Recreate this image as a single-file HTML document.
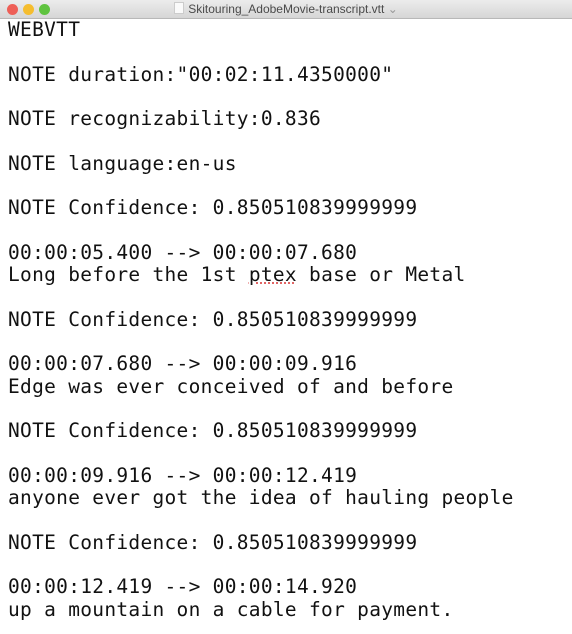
<!DOCTYPE html>
<html><head><style>
html,body{margin:0;padding:0;width:572px;height:634px;overflow:hidden;background:#fff}
.bar{position:absolute;left:0;top:0;width:572px;height:18px;background:linear-gradient(#ececec,#d6d6d6);border-bottom:1px solid #b8b8b8}
.dot{position:absolute;top:4px;width:11px;height:11px;border-radius:50%}
.title{position:absolute;left:0;right:0;top:2px;text-align:center;font:12px "Liberation Sans",sans-serif;color:#4a4a4a}
pre{position:absolute;left:8px;top:19px;margin:0;font:19.5px/22.3px "DejaVu Sans Mono",monospace;color:#111;letter-spacing:0.3px}
.sq{text-decoration:underline dotted #e06060;}
</style></head><body>
<div class="bar">
<div class="dot" style="left:7px;background:#ee5f57"></div>
<div class="dot" style="left:23px;background:#f5bd2f"></div>
<div class="dot" style="left:39px;background:#5fc33f"></div>
<div class="title"><span style="display:inline-block;width:8px;height:10px;background:#fafafa;border:1px solid #ccc;vertical-align:-1px;margin-right:4px"></span>Skitouring_AdobeMovie-transcript.vtt <span style="color:#999">⌄</span></div>
</div>
<pre>WEBVTT

NOTE duration:"00:02:11.4350000"

NOTE recognizability:0.836

NOTE language:en-us

NOTE Confidence: 0.850510839999999

00:00:05.400 --> 00:00:07.680
Long before the 1st <span class="sq">ptex</span> base or Metal

NOTE Confidence: 0.850510839999999

00:00:07.680 --> 00:00:09.916
Edge was ever conceived of and before

NOTE Confidence: 0.850510839999999

00:00:09.916 --> 00:00:12.419
anyone ever got the idea of hauling people

NOTE Confidence: 0.850510839999999

00:00:12.419 --> 00:00:14.920
up a mountain on a cable for payment.</pre>
</body></html>
